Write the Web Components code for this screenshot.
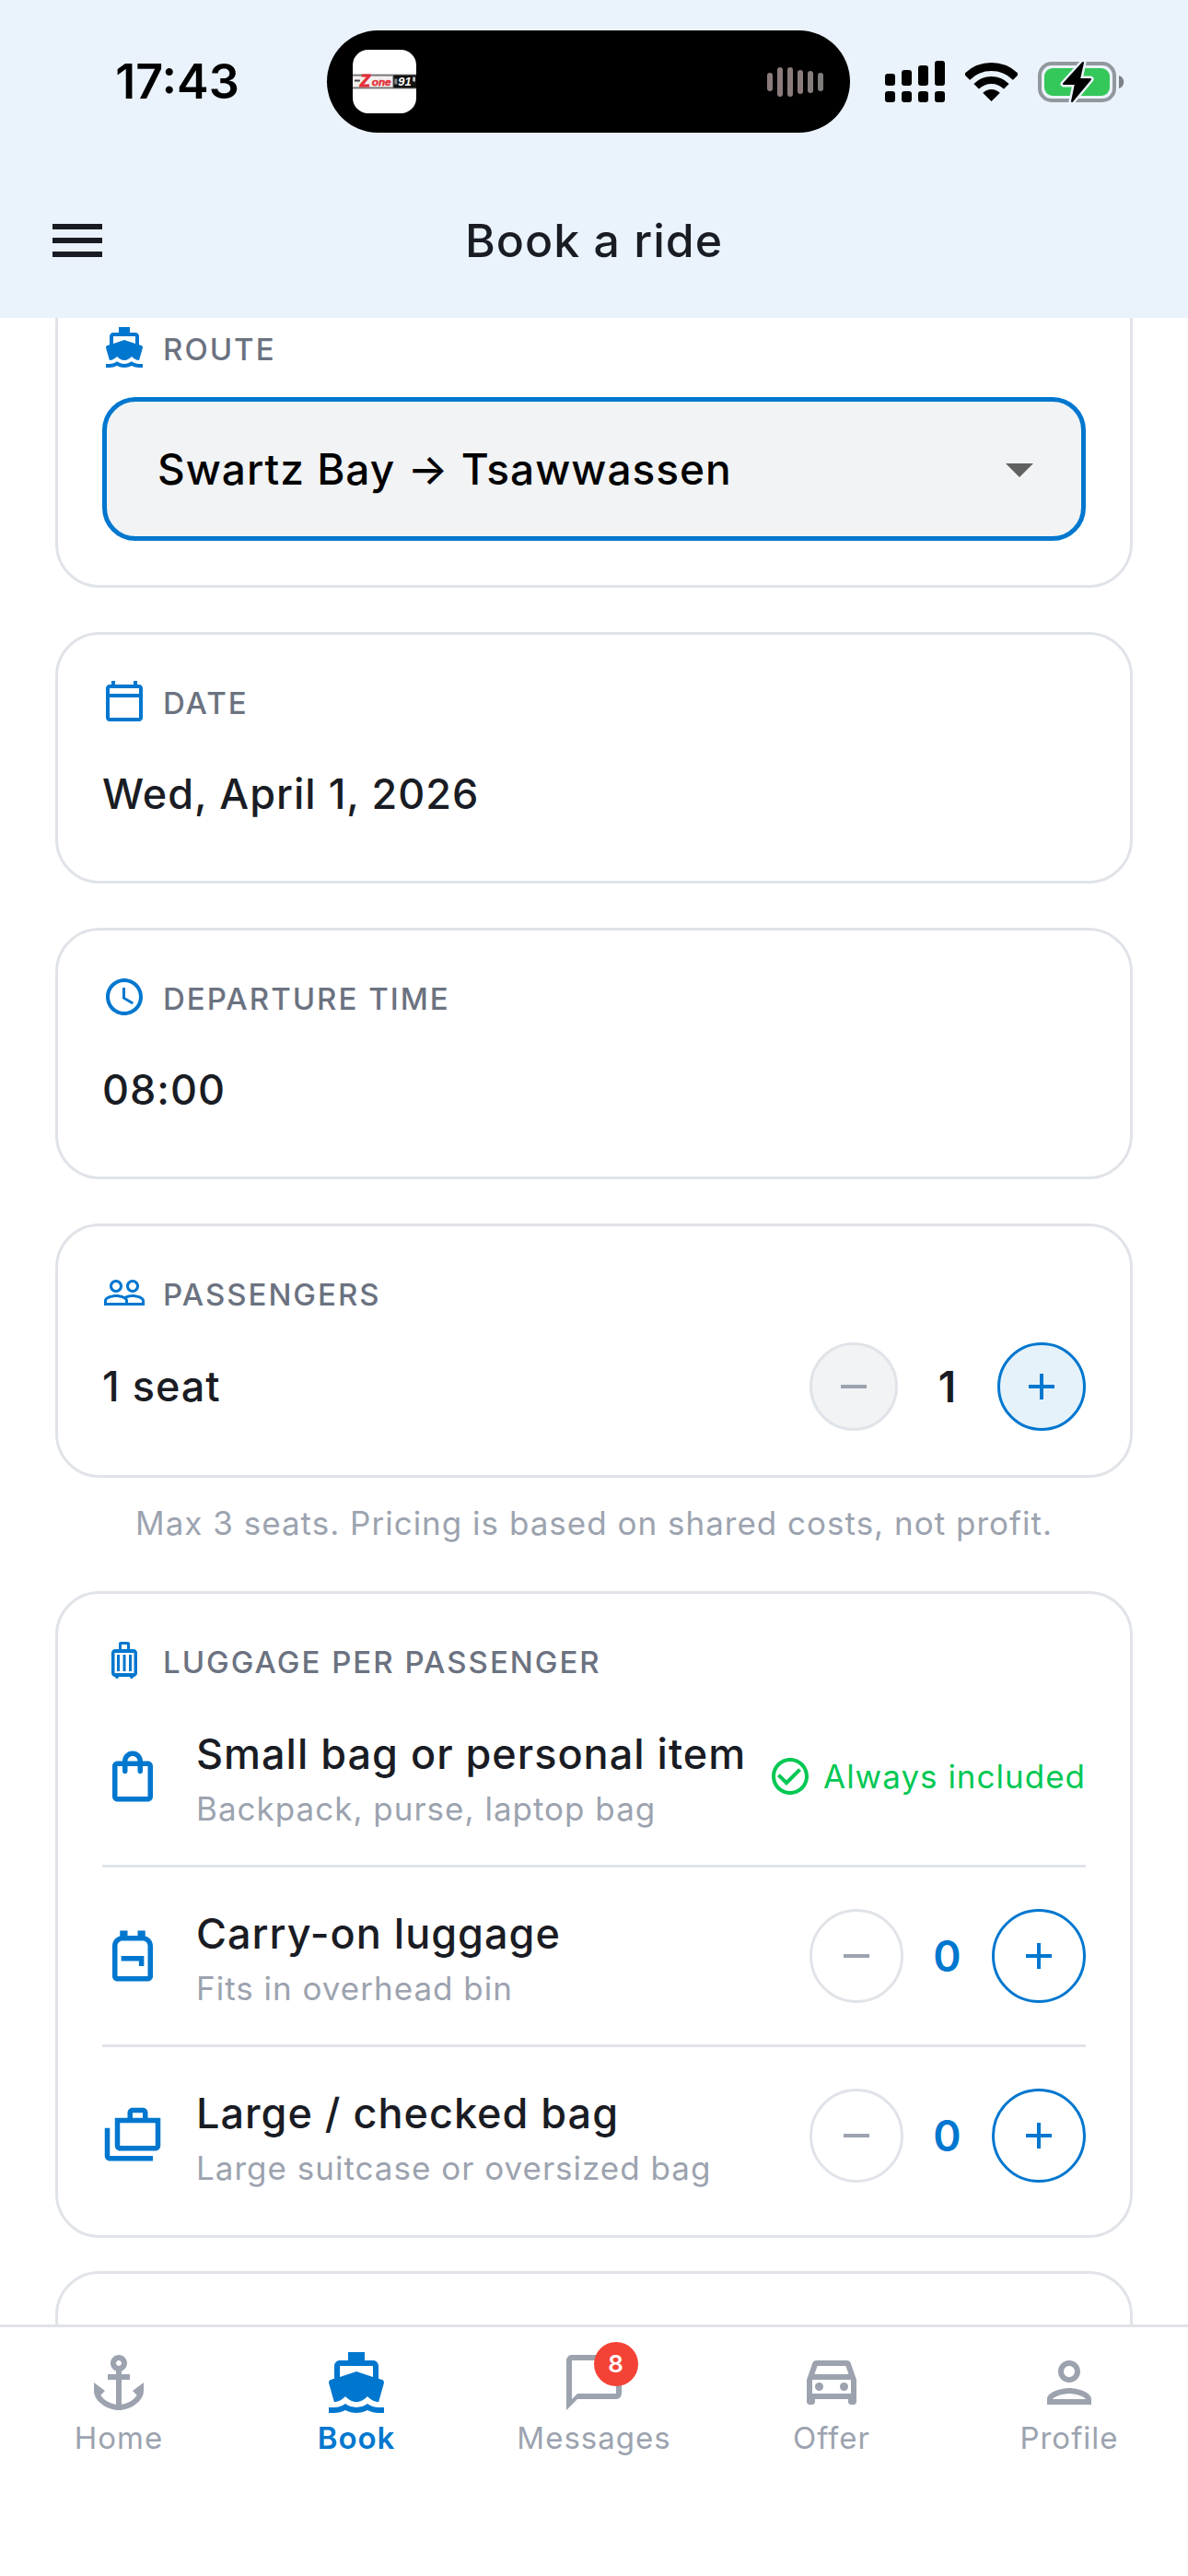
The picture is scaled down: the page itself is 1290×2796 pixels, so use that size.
<!DOCTYPE html>
<html lang="en">
<head>
  <meta charset="UTF-8">
  <meta name="viewport" content="width=device-width, initial-scale=1.0">
  <title>Book a ride</title>
  <style>
    :root {
      --blue: #0077cf;
      --ink: #1a1c24;
      --label: #6b7280;
      --muted: #9ca3af;
      --line: #e0e3e8;
      --fill: #f1f3f5;
      --header: #eaf3fb;
      --green: #00c853;
    }

    body {
      margin: 0;
      background: white;
      color: var(--ink);
      font-family: Inter, "Liberation Sans", sans-serif;
      letter-spacing: 1px;
    }
  </style>
</head>
<body>
  <booking-screen></booking-screen>

  <script>
    const ICONS = {
      menu: '<path d="M3 18h18v-2H3v2zm0-5h18v-2H3v2zm0-7v2h18V6H3z"/>',
      boat: '<path d="M20 21c-1.39 0-2.78-.47-4-1.32-2.44 1.71-5.56 1.71-8 0C6.78 20.53 5.39 21 4 21H2v2h2c1.38 0 2.74-.35 4-.99 2.52 1.29 5.48 1.29 8 0 1.26.65 2.62.99 4 .99h2v-2h-2zM3.95 19H4c1.6 0 3.02-.88 4-2 .98 1.12 2.4 2 4 2s3.02-.88 4-2c.98 1.12 2.4 2 4 2h.05l1.89-6.68c.08-.26.06-.54-.06-.78s-.34-.42-.6-.5L20 10.62V6c0-1.1-.9-2-2-2h-3V1H9v3H6c-1.1 0-2 .9-2 2v4.62l-1.29.42c-.26.08-.48.26-.6.5s-.15.52-.06.78L3.95 19zM6 6h12v3.97L12 8 6 9.97V6z"/>',
      calendar: '<path d="M20 3h-1V1h-2v2H7V1H5v2H4c-1.1 0-2 .9-2 2v16c0 1.1.9 2 2 2h16c1.1 0 2-.9 2-2V5c0-1.1-.9-2-2-2zm0 18H4V10h16v11zm0-13H4V5h16v3z"/>',
      clock: '<path d="M11.99 2C6.47 2 2 6.48 2 12s4.47 10 9.99 10C17.52 22 22 17.52 22 12S17.52 2 11.99 2zM12 20c-4.42 0-8-3.58-8-8s3.58-8 8-8 8 3.58 8 8-3.58 8-8 8zm.5-13H11v6l5.25 3.15.75-1.23-4.5-2.67z"/>',
      people: '<path d="M16.5 13c-1.2 0-3.07.34-4.5 1-1.43-.67-3.3-1-4.5-1C5.33 13 1 14.08 1 16.25V19h22v-2.75c0-2.17-4.33-3.25-6.5-3.25zm-4 4.5h-10v-1.25c0-.54 2.56-1.75 5-1.75s5 1.21 5 1.75v1.25zm9 0H14v-1.25c0-.46-.2-.86-.52-1.22.88-.3 1.96-.53 3.02-.53 2.44 0 5 1.21 5 1.75v1.25zM7.5 12c1.93 0 3.5-1.57 3.5-3.5S9.43 5 7.5 5 4 6.57 4 8.5 5.57 12 7.5 12zm0-5.5c1.1 0 2 .9 2 2s-.9 2-2 2-2-.9-2-2 .9-2 2-2zm9 5.5c1.93 0 3.5-1.57 3.5-3.5S18.43 5 16.5 5 13 6.57 13 8.5s1.57 3.5 3.5 3.5zm0-5.5c1.1 0 2 .9 2 2s-.9 2-2 2-2-.9-2-2 .9-2 2-2z"/>',
      luggage: '<path fill-rule="evenodd" d="M17 6h-2V3c0-.55-.45-1-1-1h-4c-.55 0-1 .45-1 1v3H7c-1.1 0-2 .9-2 2v11c0 1.1.9 2 2 2 0 .55.45 1 1 1s1-.45 1-1h6c0 .55.45 1 1 1s1-.45 1-1c1.1 0 2-.9 2-2V8c0-1.1-.9-2-2-2zM10.5 3.5h3V6h-3V3.5zM17.25 19H6.75V8h10.5v11z"/><path d="M8 9h1.5v9H8zM11.25 9h1.5v9h-1.5zM14.5 9H16v9h-1.5z"/>',
      bag: '<path d="M18 6h-2c0-2.21-1.79-4-4-4S8 3.79 8 6H6c-1.1 0-2 .9-2 2v12c0 1.1.9 2 2 2h12c1.1 0 2-.9 2-2V8c0-1.1-.9-2-2-2zm-6-2c1.1 0 2 .9 2 2h-4c0-1.1.9-2 2-2zm6 16H6V8h2v2c0 .55.45 1 1 1s1-.45 1-1V8h4v2c0 .55.45 1 1 1s1-.45 1-1V8h2v12z"/>',
      backpack: '<path fill-rule="evenodd" d="M20 8v12c0 1.1-.9 2-2 2H6c-1.1 0-2-.9-2-2V8c0-1.86 1.28-3.41 3-3.86V2h3v2h4V2h3v2.14c1.72.45 3 2 3 3.86zM6 8v12h12V8c0-1.1-.9-2-2-2H8c-1.1 0-2 .9-2 2z"/><path d="M16.5 12v4h-2v-2h-7v-2z"/>',
      cases: '<path fill-rule="evenodd" d="M18 5V3c0-1.1-.9-2-2-2h-4c-1.1 0-2 .9-2 2v2H5v11c0 1.1.9 2 2 2h14c1.1 0 2-.9 2-2V5h-5zm-6-2h4v2h-4V3zm9 13H7V7h14v9zM3 9H1v11c0 1.1.9 2 2 2h17v-2H3V9z"/>',
      check: '<path d="M16.59 7.58L10 14.17l-3.59-3.58L5 12l5 5 8-8zM12 2C6.48 2 2 6.48 2 12s4.48 10 10 10 10-4.48 10-10S17.52 2 12 2zm0 18c-4.42 0-8-3.58-8-8s3.58-8 8-8 8 3.58 8 8-3.58 8-8 8z"/>',
      minus: '<path d="M19 13H5v-2h14v2z"/>',
      plus: '<path d="M19 13h-6v6h-2v-6H5v-2h6V5h2v6h6v2z"/>',
      arrow: '<path d="M7 10l5 5 5-5z"/>',
      anchor: '<path d="M17 15l1.55 1.55c-.96 1.69-3.33 3.04-5.55 3.37V11h3V9h-3V7.82C14.16 7.4 15 6.3 15 5c0-1.65-1.35-3-3-3S9 3.35 9 5c0 1.3.84 2.4 2 2.82V9H8v2h3v8.92c-2.22-.33-4.59-1.68-5.55-3.37L7 15l-4-3v3c0 3.88 4.92 7 9 7s9-3.12 9-7v-3l-4 3zM12 4c.55 0 1 .45 1 1s-.45 1-1 1-1-.45-1-1 .45-1 1-1z"/>',
      chat: '<path d="M20 2H4c-1.1 0-2 .9-2 2v18l4-4h14c1.1 0 2-.9 2-2V4c0-1.1-.9-2-2-2zm0 14H6l-2 2V4h16v12z"/>',
      car: '<path d="M18.92 5.01C18.72 4.42 18.16 4 17.5 4h-11c-.66 0-1.21.42-1.42 1.01L3 11v8c0 .55.45 1 1 1h1c.55 0 1-.45 1-1v-1h12v1c0 .55.45 1 1 1h1c.55 0 1-.45 1-1v-8l-2.08-5.99zM6.85 6h10.29l1.04 3H5.81l1.04-3zM19 16H5v-5h14v5z"/><circle cx="7.5" cy="13.5" r="1.5"/><circle cx="16.5" cy="13.5" r="1.5"/>',
      person: '<path d="M12 6c1.1 0 2 .9 2 2s-.9 2-2 2-2-.9-2-2 .9-2 2-2m0 10c2.7 0 5.8 1.29 6 2H6c.23-.72 3.31-2 6-2m0-12C9.79 4 8 5.79 8 8s1.79 4 4 4 4-1.79 4-4-1.79-4-4-4zm0 10c-2.67 0-8 1.34-8 4v2h16v-2c0-2.66-5.33-4-8-4z"/>'
    };

    class AppIcon extends HTMLElement {
      constructor() {
        super();
        this.attachShadow({ mode: 'open' });
      }

      connectedCallback() {
        this.shadowRoot.innerHTML = `
          <style>
            :host {
              display: block;
              flex: none;
              width: 48px;
              height: 48px;
            }

            svg {
              display: block;
              width: 100%;
              height: 100%;
              fill: currentColor;
            }
          </style>
          <svg viewBox="0 0 24 24" aria-hidden="true">${ICONS[this.getAttribute('name')]}</svg>
        `;
      }
    }

    class StatusBar extends HTMLElement {
      constructor() {
        super();
        this.attachShadow({ mode: 'open' });
        this.shadowRoot.innerHTML = `
          <style>
            :host {
              display: grid;
              grid-template-columns: 355fr 568px 367fr;
              align-items: center;
              padding: 33px 0;
              color: black;
              letter-spacing: normal;
            }

            .time {
              padding-left: 30px;
              text-align: center;
              font-size: 52px;
              line-height: 60px;
              font-weight: 600;
            }

            .island {
              display: flex;
              align-items: center;
              justify-content: space-between;
              box-sizing: border-box;
              height: 111px;
              padding: 0 28px;
              border-radius: 56px;
              background: black;
            }

            .system {
              display: flex;
              align-items: center;
              gap: 22px;
              padding-left: 38px;
            }

            svg {
              display: block;
              flex: none;
            }
          </style>

          <div class="time">17:43</div>

          <div class="island">
            <svg width="69" height="69" viewBox="0 0 70 70">
              <defs><clipPath id="cover"><rect width="70" height="70" rx="17"/></clipPath></defs>
              <g clip-path="url(#cover)" font-family="Liberation Sans, sans-serif" font-weight="700" font-style="italic">
                <rect width="70" height="70" fill="white"/>
                <rect x="0" y="27" width="70" height="16" fill="#777"/>
                <rect x="0" y="29" width="44" height="12" fill="#f4eeee"/>
                <rect x="45" y="28" width="25" height="14" fill="#111"/>
                <text x="8" y="41" font-size="18" fill="#e32f38" stroke="#e32f38">Z</text>
                <text x="21" y="40" font-size="12" fill="#e32f38" stroke="#e32f38" stroke-width=".5">one</text>
                <text x="50" y="40" font-size="13" fill="white">91</text>
                <rect x="2" y="33" width="6" height="2" fill="#444"/>
                <rect x="46" y="32" width="3" height="6" fill="#888"/>
                <rect x="66" y="30" width="3" height="5" fill="#bbb"/>
              </g>
            </svg>
            <svg width="62" height="32" viewBox="0 0 62 32">
              <g fill="#8b7b7b">
                <rect x="0" y="6" width="6" height="20" rx="3"/>
                <rect x="11" y="0" width="6" height="32" rx="3"/>
                <rect x="22" y="0" width="6" height="32" rx="3"/>
                <rect x="33" y="3" width="6" height="26" rx="3"/>
                <rect x="44" y="4" width="6" height="24" rx="3" fill="#847d7c"/>
                <rect x="55" y="6" width="6" height="20" rx="3" fill="#7f7d7b"/>
              </g>
            </svg>
          </div>

          <div class="system">
            <svg width="65" height="45" viewBox="0 0 65 45">
              <rect x="0" y="14" width="11" height="13" rx="3"/>
              <rect x="18" y="10" width="11" height="17" rx="3"/>
              <rect x="36" y="5" width="11" height="22" rx="3"/>
              <rect x="54" y="0" width="11" height="27" rx="3"/>
              <rect x="0" y="33" width="11" height="12" rx="3"/>
              <rect x="18" y="33" width="11" height="12" rx="3"/>
              <rect x="36" y="33" width="11" height="12" rx="3"/>
              <rect x="54" y="33" width="11" height="12" rx="3"/>
            </svg>
            <svg width="57" height="42" viewBox="0 0 57 42">
              <defs><clipPath id="fan"><path d="M28.5 42L-16-2h89z"/></clipPath></defs>
              <g clip-path="url(#fan)" fill="none" stroke="black">
                <circle cx="28.5" cy="42" r="37.5" stroke-width="9"/>
                <circle cx="28.5" cy="42" r="23" stroke-width="8"/>
                <circle cx="28.5" cy="42" r="13" fill="black" stroke="none"/>
              </g>
            </svg>
            <svg width="94" height="46" viewBox="0 0 94 46">
              <rect x="2" y="3" width="81" height="40" rx="13" fill="none" stroke="#92989d" stroke-width="4"/>
              <rect x="7" y="8" width="71" height="30" rx="9" fill="#34c759"/>
              <path d="M88 16c7 2 7 12 0 14z" fill="#7c8186"/>
              <path d="M49 2L28 25h13l-4 19 20-24H45z" fill="black" stroke="#eaf3fb" stroke-width="7" stroke-linejoin="round"/>
              <path d="M49 2L28 25h13l-4 19 20-24H45z" fill="black" stroke="black" stroke-width="2" stroke-linejoin="round"/>
            </svg>
          </div>
        `;
      }
    }

    class AppBar extends HTMLElement {
      constructor() {
        super();
        this.attachShadow({ mode: 'open' });
        this.shadowRoot.innerHTML = `
          <style>
            :host {
              display: grid;
              grid-template-columns: 1fr auto 1fr;
              align-items: center;
              min-height: 168px;
              padding: 0 48px;
            }

            button {
              justify-self: start;
              padding: 0;
              border: 0;
              background: none;
              color: inherit;
              cursor: pointer;
            }

            app-icon {
              width: 72px;
              height: 72px;
            }

            h1 {
              margin: 0;
              font-size: 50px;
              line-height: 60px;
              font-weight: 500;
            }
          </style>
          <button type="button" aria-label="Open menu"><app-icon name="menu"></app-icon></button>
          <h1><slot></slot></h1>
        `;
      }
    }

    // Outlined card with an optional icon + caption row on top
    class FieldCard extends HTMLElement {
      constructor() {
        super();
        this.attachShadow({ mode: 'open' });
      }

      connectedCallback() {
        const icon = this.getAttribute('icon');
        this.shadowRoot.innerHTML = `
          <style>
            :host {
              display: flex;
              flex-direction: column;
              gap: 30px;
              padding: 48px;
              border: 3px solid var(--line);
              border-radius: 48px;
              background: white;
            }

            header {
              display: flex;
              align-items: center;
              gap: 18px;
              height: 48px;
              color: var(--blue);
            }

            .caption {
              padding-top: 4px;
              color: var(--label);
              font-size: 33px;
              line-height: 40px;
              font-weight: 500;
              letter-spacing: 2px;
            }
          </style>
          ${icon ? `
            <header>
              <app-icon name="${icon}"></app-icon>
              <div class="caption"><slot name="label"></slot></div>
            </header>
          ` : ''}
          <slot></slot>
        `;
      }
    }

    class RouteField extends HTMLElement {
      constructor() {
        super();
        this.attachShadow({ mode: 'open' });
        this.shadowRoot.innerHTML = `
          <style>
            :host {
              display: block;
            }

            .box {
              display: grid;
              align-items: center;
            }

            select, app-icon {
              grid-area: 1 / 1;
            }

            select {
              appearance: none;
              box-sizing: border-box;
              width: 100%;
              height: 156px;
              padding: 0 120px 0 55px;
              border: 5px solid var(--blue);
              border-radius: 36px;
              background: var(--fill);
              color: black;
              font: 500 46px/60px Inter, "Liberation Sans", sans-serif;
              letter-spacing: inherit;
            }

            app-icon {
              justify-self: end;
              width: 72px;
              height: 72px;
              margin-right: 36px;
              color: #616161;
              pointer-events: none;
            }
          </style>
          <field-card icon="boat">
            <label slot="label" for="route">ROUTE</label>
            <div class="box">
              <select id="route">
                <option>Swartz Bay → Tsawwassen</option>
              </select>
              <app-icon name="arrow"></app-icon>
            </div>
          </field-card>
        `;
      }
    }

    class FieldValue extends HTMLElement {
      constructor() {
        super();
        this.attachShadow({ mode: 'open' });
        this.shadowRoot.innerHTML = `
          <style>
            :host {
              display: flex;
              align-items: center;
              justify-content: space-between;
              min-height: 93px;
              font-size: 45px;
              line-height: 60px;
              font-weight: 500;
            }
          </style>
          <span><slot></slot></span>
          <slot name="action"></slot>
        `;
      }
    }

    class CountStepper extends HTMLElement {
      constructor() {
        super();
        this.attachShadow({ mode: 'open' });
      }

      connectedCallback() {
        this.min = Number(this.getAttribute('min') || 0);
        this.max = Number(this.getAttribute('max') || 3);
        this.value = Number(this.getAttribute('value') || 0);
        const what = this.getAttribute('what');

        this.shadowRoot.innerHTML = `
          <style>
            :host {
              display: grid;
              grid-template-columns: 102px 96px 102px;
              align-items: center;
              justify-items: center;
              color: var(--blue);
            }

            :host([filled]) {
              grid-template-columns: 96px 108px 96px;
              color: var(--ink);
            }

            button {
              display: grid;
              place-items: center;
              box-sizing: border-box;
              width: 100%;
              aspect-ratio: 1;
              padding: 0;
              border: 3px solid var(--blue);
              border-radius: 50%;
              background: none;
              color: var(--blue);
              cursor: pointer;
            }

            :host([filled]) button {
              background: #e5f2fa;
            }

            button:disabled {
              border-color: var(--line);
              color: var(--muted);
              cursor: default;
            }

            :host([filled]) button:disabled {
              background: var(--fill);
            }

            output {
              font-size: 46px;
              line-height: 60px;
              font-weight: 600;
            }
          </style>
          <button type="button" class="less" aria-label="Fewer ${what}"><app-icon name="minus"></app-icon></button>
          <output></output>
          <button type="button" class="more" aria-label="More ${what}"><app-icon name="plus"></app-icon></button>
        `;

        this.shadowRoot.querySelector('.less').addEventListener('click', () => this.change(-1));
        this.shadowRoot.querySelector('.more').addEventListener('click', () => this.change(1));
        this.update();
      }

      change(step) {
        this.value = Math.min(this.max, Math.max(this.min, this.value + step));
        this.update();
      }

      update() {
        this.shadowRoot.querySelector('output').textContent = this.value;
        this.shadowRoot.querySelector('.less').disabled = this.value <= this.min;
        this.shadowRoot.querySelector('.more').disabled = this.value >= this.max;
      }
    }

    class LuggageRow extends HTMLElement {
      constructor() {
        super();
        this.attachShadow({ mode: 'open' });
      }

      connectedCallback() {
        this.shadowRoot.innerHTML = `
          <style>
            :host {
              display: flex;
              align-items: center;
              min-height: 120px;
              padding: 36px 0;
              border-bottom: 3px solid var(--line);
            }

            :host(:first-child) {
              padding-top: 12px;
            }

            :host(:last-child) {
              padding-bottom: 0;
              border-bottom: 0;
            }

            app-icon {
              width: 66px;
              height: 66px;
              margin-right: 36px;
              color: var(--blue);
            }

            .text {
              display: grid;
              flex: 1;
              gap: 4px;
              padding-top: 6px;
              white-space: nowrap;
            }

            .title {
              font-size: 45px;
              line-height: 60px;
              font-weight: 500;
            }

            .hint {
              color: var(--muted);
              font-size: 35px;
              line-height: 50px;
            }
          </style>
          <app-icon name="${this.getAttribute('icon')}"></app-icon>
          <div class="text">
            <div class="title"><slot></slot></div>
            <div class="hint"><slot name="hint"></slot></div>
          </div>
          <slot name="action"></slot>
        `;
      }
    }

    class IncludedTag extends HTMLElement {
      constructor() {
        super();
        this.attachShadow({ mode: 'open' });
        this.shadowRoot.innerHTML = `
          <style>
            :host {
              display: flex;
              align-items: center;
              gap: 12px;
              color: var(--green);
              font-size: 35px;
              line-height: 50px;
              white-space: nowrap;
            }
          </style>
          <app-icon name="check"></app-icon>
          <span><slot></slot></span>
        `;
      }
    }

    class NavTab extends HTMLElement {
      constructor() {
        super();
        this.attachShadow({ mode: 'open' });
      }

      connectedCallback() {
        const badge = this.getAttribute('badge');
        this.shadowRoot.innerHTML = `
          <style>
            :host {
              display: block;
              flex: 1 1 0;
              color: var(--muted);
            }

            :host([active]) {
              color: var(--blue);
              font-weight: 600;
            }

            a {
              display: flex;
              flex-direction: column;
              align-items: center;
              gap: 4px;
              color: inherit;
              font-size: 33px;
              line-height: 40px;
              text-decoration: none;
            }

            .icon {
              position: relative;
            }

            app-icon {
              width: 72px;
              height: 72px;
            }

            .badge {
              position: absolute;
              top: -8px;
              right: -12px;
              width: 48px;
              border-radius: 50%;
              background: #f44336;
              color: white;
              font-size: 26px;
              line-height: 48px;
              font-weight: 600;
              text-align: center;
            }
          </style>
          <a href="#${this.getAttribute('page')}">
            <span class="icon">
              <app-icon name="${this.getAttribute('icon')}"></app-icon>
              ${badge ? `<span class="badge">${badge}</span>` : ''}
            </span>
            <span><slot></slot></span>
          </a>
        `;
      }
    }

    class BookingScreen extends HTMLElement {
      constructor() {
        super();
        this.attachShadow({ mode: 'open' });
        this.shadowRoot.innerHTML = `
          <style>
            :host {
              display: flex;
              flex-direction: column;
              height: 100vh;
            }

            .top {
              background: var(--header);
            }

            main {
              flex: 1;
              min-height: 0;
              overflow-y: auto;
              scrollbar-width: none;
            }

            form {
              display: flex;
              flex-direction: column;
              gap: 48px;
              padding: 48px 60px;
            }

            .group {
              display: flex;
              flex-direction: column;
              gap: 24px;
            }

            .note {
              margin: 0;
              color: var(--muted);
              font-size: 35px;
              line-height: 51px;
              text-align: center;
            }

            .bags {
              display: flex;
              flex-direction: column;
              gap: 36px;
            }

            .next {
              min-height: 300px;
            }

            nav {
              display: flex;
              padding: 24px 0 130px;
              border-top: 3px solid var(--line);
              background: white;
            }
          </style>

          <div class="top">
            <status-bar></status-bar>
            <app-bar>Book a ride</app-bar>
          </div>

          <main>
            <form>
              <route-field></route-field>

              <field-card icon="calendar">
                <span slot="label">DATE</span>
                <field-value>Wed, April 1, 2026</field-value>
              </field-card>

              <field-card icon="clock">
                <span slot="label">DEPARTURE TIME</span>
                <field-value>08:00</field-value>
              </field-card>

              <div class="group">
                <field-card icon="people">
                  <span slot="label">PASSENGERS</span>
                  <field-value>1 seat
                    <count-stepper slot="action" filled min="1" value="1" what="seats"></count-stepper>
                  </field-value>
                </field-card>
                <p class="note">Max 3 seats. Pricing is based on shared costs, not profit.</p>
              </div>

              <div class="bags">
                <field-card icon="luggage">
                  <span slot="label">LUGGAGE PER PASSENGER</span>
                  <div>
                    <luggage-row icon="bag">Small bag or personal item
                      <span slot="hint">Backpack, purse, laptop bag</span>
                      <included-tag slot="action">Always included</included-tag>
                    </luggage-row>
                    <luggage-row icon="backpack">Carry-on luggage
                      <span slot="hint">Fits in overhead bin</span>
                      <count-stepper slot="action" what="carry-on bags"></count-stepper>
                    </luggage-row>
                    <luggage-row icon="cases">Large / checked bag
                      <span slot="hint">Large suitcase or oversized bag</span>
                      <count-stepper slot="action" what="checked bags"></count-stepper>
                    </luggage-row>
                  </div>
                </field-card>
                <field-card class="next"></field-card>
              </div>
            </form>
          </main>

          <nav>
            <nav-tab icon="anchor" page="home">Home</nav-tab>
            <nav-tab icon="boat" page="book" active>Book</nav-tab>
            <nav-tab icon="chat" page="messages" badge="8">Messages</nav-tab>
            <nav-tab icon="car" page="offer">Offer</nav-tab>
            <nav-tab icon="person" page="profile">Profile</nav-tab>
          </nav>
        `;
      }

      connectedCallback() {
        // open with the route picker just under the app bar
        this.shadowRoot.querySelector('main').scrollTop = 91;
      }
    }

    customElements.define('app-icon', AppIcon);
    customElements.define('status-bar', StatusBar);
    customElements.define('app-bar', AppBar);
    customElements.define('field-card', FieldCard);
    customElements.define('route-field', RouteField);
    customElements.define('field-value', FieldValue);
    customElements.define('count-stepper', CountStepper);
    customElements.define('luggage-row', LuggageRow);
    customElements.define('included-tag', IncludedTag);
    customElements.define('nav-tab', NavTab);
    customElements.define('booking-screen', BookingScreen);
  </script>
</body>
</html>
